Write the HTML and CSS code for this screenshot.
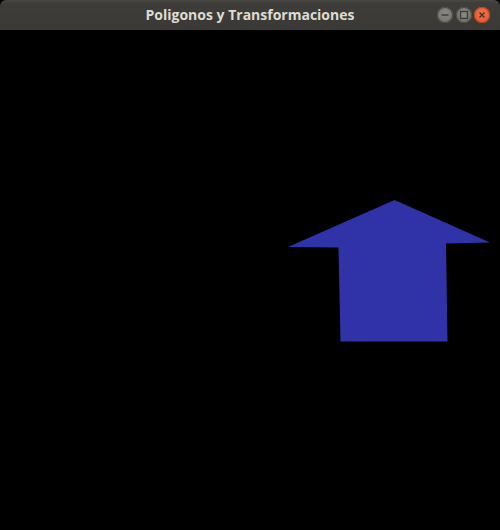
FILE: index.html
```html
<!DOCTYPE html>
<html>
<head>
<meta charset="utf-8">
<link rel="stylesheet" href="styles.css">
</head>
<body>
<div class="window">
  <div class="titlebar">
    <span class="title">Poligonos y Transformaciones</span>
    <div class="controls">
      <span class="btn min"><svg width="16" height="16" viewBox="0 0 16 16"><line x1="4.5" y1="8" x2="11.5" y2="8" stroke="#3c3b37" stroke-width="1.4"/></svg></span>
      <span class="btn max"><svg width="16" height="16" viewBox="0 0 16 16"><rect x="4.5" y="4.5" width="7" height="7" fill="none" stroke="#3c3b37" stroke-width="1.3"/></svg></span>
      <span class="btn close"><svg width="16" height="16" viewBox="0 0 16 16"><path d="M5.5 5.5 L10.5 10.5 M10.5 5.5 L5.5 10.5" stroke="#3c3b37" stroke-width="1.5"/></svg></span>
    </div>
  </div>
  <div class="canvas">
    <svg class="scene" width="500" height="500" viewBox="0 30 500 500">
      <polygon points="394.5,200 490,242.5 446,243.5 447.5,341.5 340.5,341.5 338.5,247.5 288,247" fill="#3033a8"/>
    </svg>
  </div>
</div>
</body>
</html>
```

FILE: styles.css
```css
html, body {
  margin: 0;
  padding: 0;
  background: #000;
}
.window {
  width: 500px;
  height: 530px;
  display: flex;
  flex-direction: column;
  background: #000;
}
.titlebar {
  position: relative;
  height: 30px;
  flex: 0 0 30px;
  background: linear-gradient(#494843 0px, #3e3d39 3px, #3a3935 30px);
  border-radius: 6px 6px 0 0;
  display: flex;
  align-items: center;
  justify-content: center;
}
.title {
  font-family: "Open Sans", "DejaVu Sans", sans-serif;
  font-weight: 700;
  font-size: 14px;
  color: #dfdbd2;
  margin-top: -1px;
}
.controls {
  position: absolute;
  right: 10px;
  top: 7px;
  display: flex;
  gap: 2.5px;
}
.btn {
  width: 16px;
  height: 16px;
  border-radius: 50%;
  display: block;
}
.btn svg { display: block; }
.min, .max {
  background: radial-gradient(circle at 50% 40%, #8a8984, #6d6c67);
  box-shadow: inset 0 0 0 1px #4a4945;
}
.close {
  background: radial-gradient(circle at 50% 40%, #f27447, #e4532b);
  box-shadow: inset 0 0 0 1px #b8441f;
}
.canvas {
  flex: 1;
  background: #000;
}
.scene {
  display: block;
}
```
